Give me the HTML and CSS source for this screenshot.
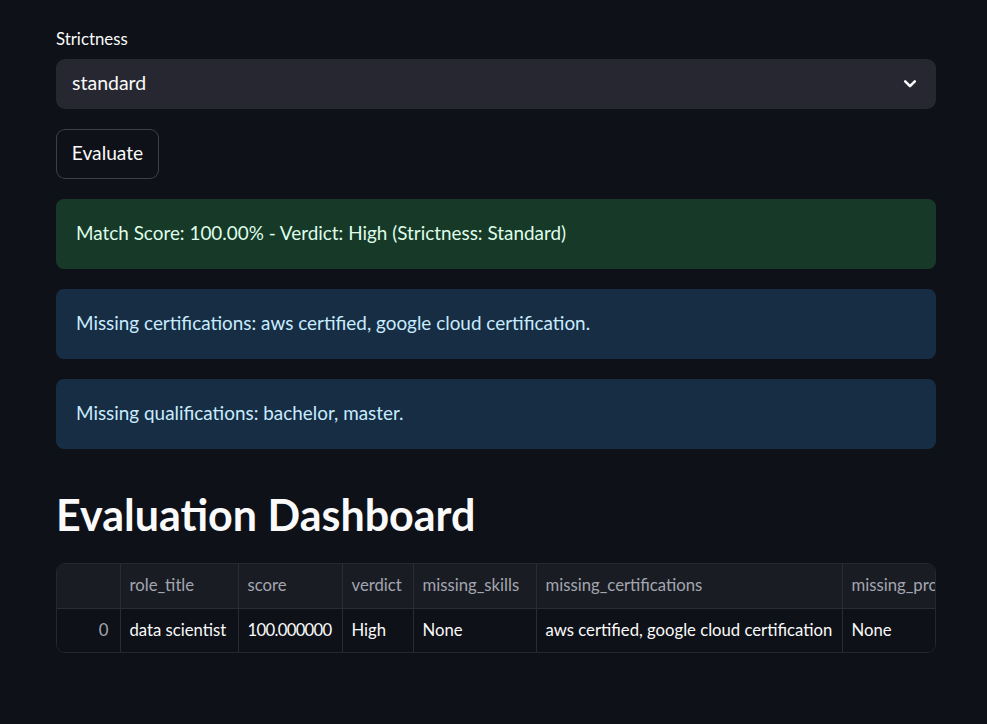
FILE: index.html
```html
<!DOCTYPE html>
<html lang="en">
<head>
<meta charset="utf-8">
<title>Evaluation</title>
<link rel="stylesheet" href="styles.css">
</head>
<body>
<main class="main">
  <div class="field">
    <label class="field-label">Strictness</label>
    <div class="select">
      <span class="select-value">standard</span>
      <svg class="chevron" width="16" height="16" viewBox="0 0 16 16"><path d="M3.2 5.4 L8 10.2 L12.8 5.4" fill="none" stroke="#fafafa" stroke-width="2.6" stroke-linecap="round" stroke-linejoin="round"/></svg>
    </div>
  </div>
  <div class="btn-row"><button class="btn">Evaluate</button></div>
  <div class="alert alert-success">Match Score: 100.00% - Verdict: High (Strictness: Standard)</div>
  <div class="alert alert-info">Missing certifications: aws certified, google cloud certification.</div>
  <div class="alert alert-info">Missing qualifications: bachelor, master.</div>
  <h1 class="heading">Evaluation Dashboard</h1>
  <div class="table-wrap">
    <table class="df">
      <colgroup>
        <col class="c-idx"><col class="c-role"><col class="c-score"><col class="c-verdict"><col class="c-skills"><col class="c-cert"><col class="c-proj">
      </colgroup>
      <thead>
        <tr><th></th><th>role_title</th><th>score</th><th>verdict</th><th>missing_skills</th><th>missing_certifications</th><th>missing_projects</th></tr>
      </thead>
      <tbody>
        <tr><td class="idx">0</td><td>data scientist</td><td class="num">100.000000</td><td>High</td><td>None</td><td>aws certified, google cloud certification</td><td>None</td></tr>
      </tbody>
    </table>
  </div>
</main>
</body>
</html>
```
FILE: styles.css
```css
html, body {
  margin: 0;
  padding: 0;
  background: #0e1117;
  color: #fafafa;
  font-family: Lato, "Noto Sans", sans-serif;
}
.main {
  width: 880px;
  margin-left: 56px;
  padding-top: 28px;
  display: flex;
  flex-direction: column;
}
.field {
  display: flex;
  flex-direction: column;
  gap: 9px;
}
.field-label {
  font-size: 16.8px;
  line-height: 22px;
  color: #fafafa;
}
.select {
  height: 50px;
  background: #262730;
  border-radius: 9px;
  display: flex;
  align-items: center;
  justify-content: space-between;
  padding: 0 18px 0 16px;
  box-sizing: border-box;
}
.select-value {
  font-size: 19.5px;
  padding-bottom: 3px;
}
.chevron { display: block; }
.btn-row {
  margin-top: 20px;
  display: flex;
}
.btn {
  height: 50px;
  width: 103px;
  background: #0e1117;
  border: 1px solid rgba(250, 250, 250, 0.2);
  border-radius: 9px;
  color: #fafafa;
  font-family: inherit;
  font-size: 19.2px;
  padding: 0 0 3px;
}
.alert {
  margin-top: 20px;
  height: 70px;
  box-sizing: border-box;
  border-radius: 8px;
  padding: 0 20px 3px;
  display: flex;
  align-items: center;
  font-size: 18.9px;
}
.alert-success {
  background: #173928;
  color: #dffde9;
}
.alert-info {
  background: #172d43;
  color: #c7ebff;
}
.heading {
  margin: 0;
  padding: 38px 0 0;
  font-size: 43px;
  line-height: 56px;
  font-weight: 700;
  color: #fafafa;
}
.table-wrap {
  margin-top: 20px;
  border: 1px solid #26282e;
  border-radius: 9px;
  overflow: hidden;
  width: 880px;
  box-sizing: border-box;
}
.df {
  border-collapse: collapse;
  table-layout: fixed;
  width: 1000px;
  font-size: 16.7px;
}
.c-idx { width: 63px; }
.c-role { width: 118px; }
.c-score { width: 104px; }
.c-verdict { width: 71px; }
.c-skills { width: 123px; }
.c-cert { width: 306px; }
.c-proj { width: 215px; }
.df th, .df td {
  text-align: left;
  padding: 0 9px 2px;
  white-space: nowrap;
  overflow: hidden;
  border-left: 1px solid #2a2c33;
}
.df th:first-child, .df td:first-child { border-left: none; }
.df th {
  height: 42px;
  background: #1a1c24;
  color: #a3a6b0;
  font-weight: 400;
  border-bottom: 1px solid #2a2c33;
}
.df td {
  height: 41px;
  background: #0e1117;
  color: #fafafa;
}
.df td.num {
  letter-spacing: -0.7px;
}
.df td.idx {
  text-align: right;
  padding-right: 11px;
  color: #a3a6b0;
}
```
